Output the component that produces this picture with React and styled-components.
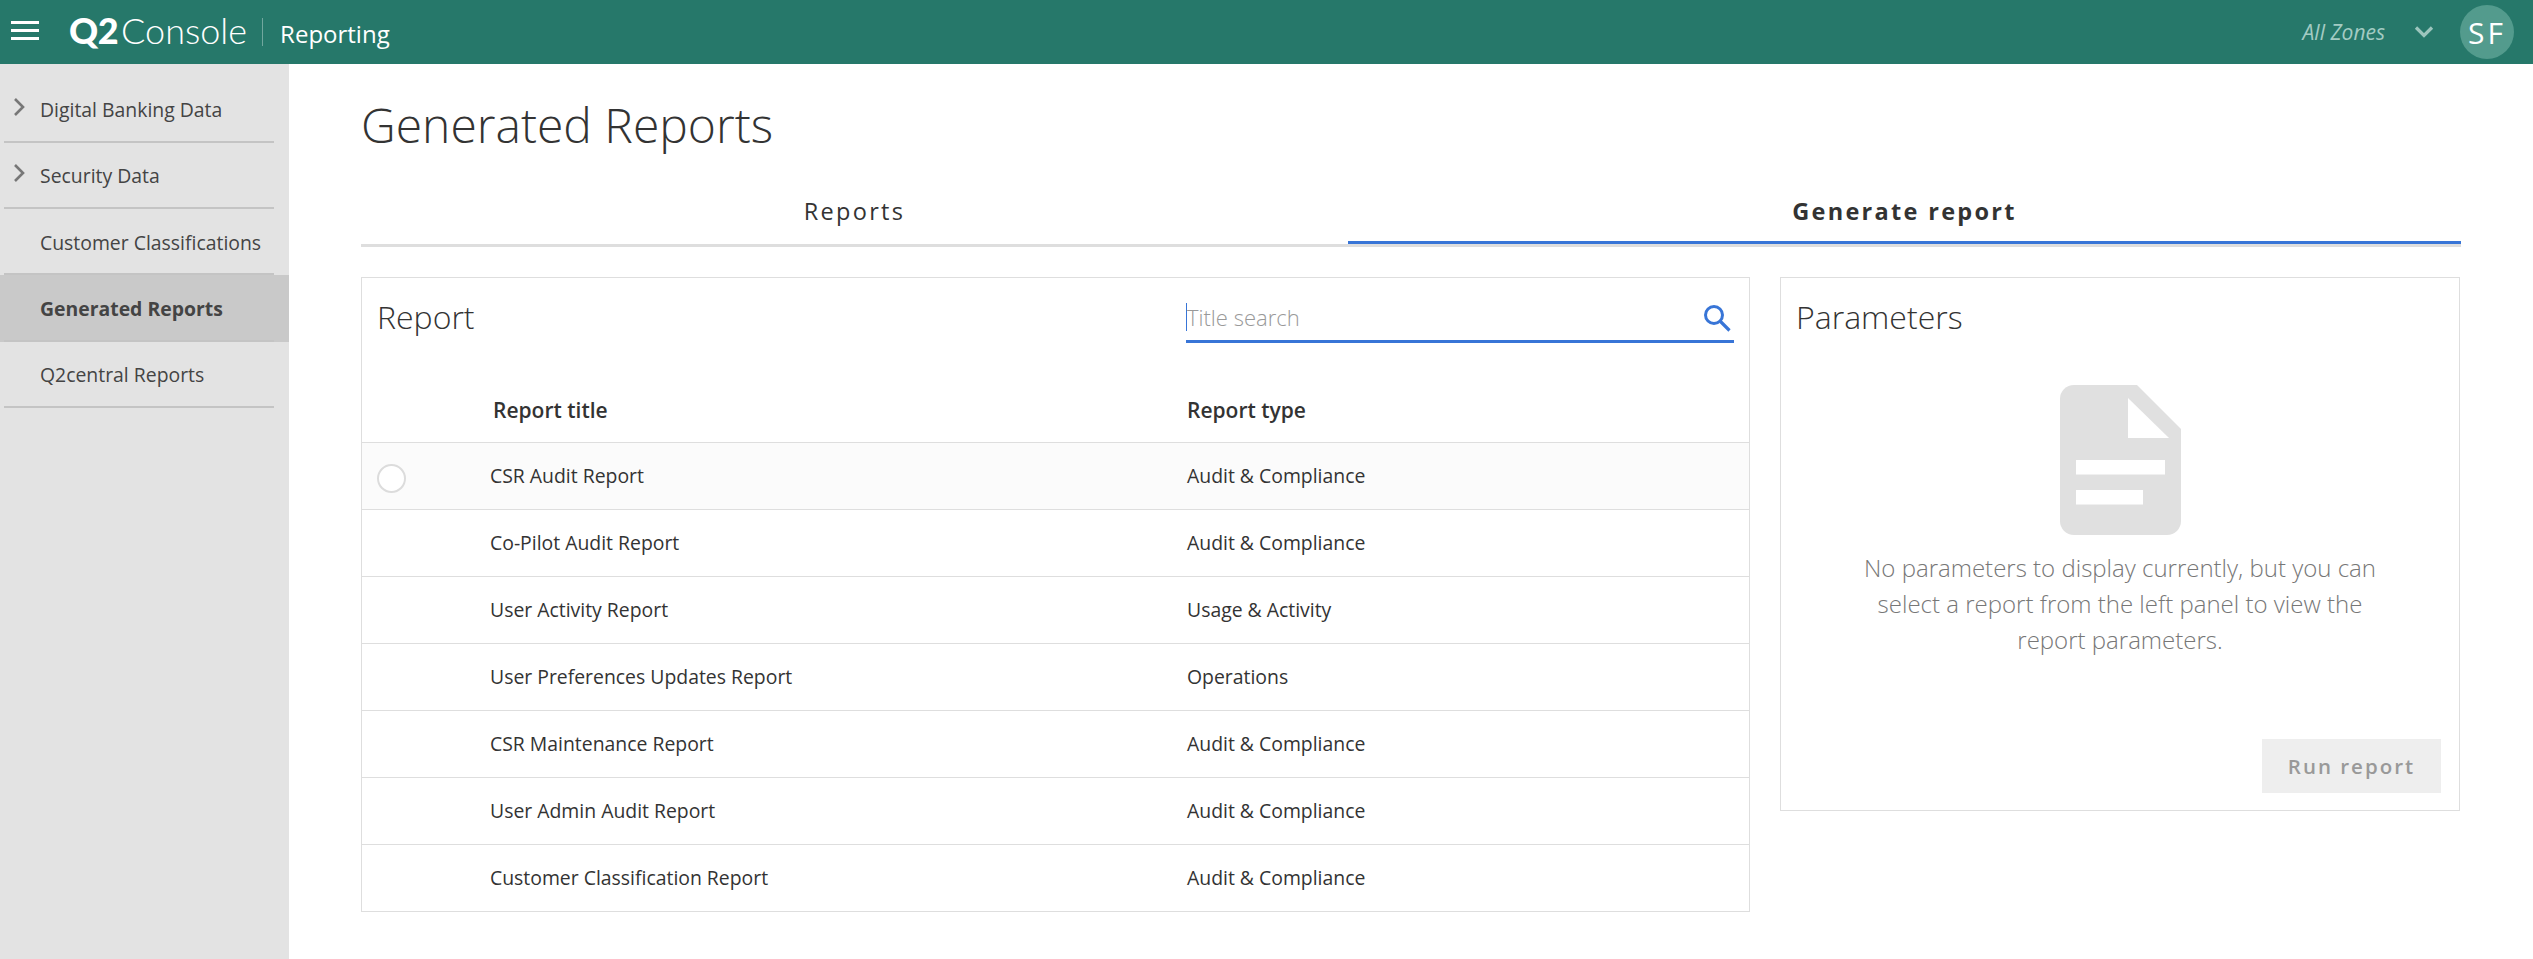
import styled, { createGlobalStyle } from "styled-components";

const GlobalStyle = createGlobalStyle`
  html, body {
    margin: 0;
    padding: 0;
    background: #fff;
    font-family: "Open Sans", "Liberation Sans", sans-serif;
    color: #333;
  }
  * { box-sizing: border-box; }
`;

const Page = styled.div`
  display: flex;
  flex-direction: column;
  height: 959px;
  overflow: hidden;
`;

const TopBar = styled.header`
  display: flex;
  align-items: center;
  height: 64px;
  flex: none;
  background: #26786a;
  color: #fff;
  padding: 0 19px 0 11px;
`;

const Burger = styled.div`
  display: flex;
  flex-direction: column;
  gap: 5px;
  width: 28px;
  margin-right: 30px;
  margin-top: -4px;
  span {
    height: 3px;
    background: #fff;
  }
`;

const Logo = styled.div`
  display: flex;
  align-items: baseline;
  color: #fff;
  font-family: Lato, "Open Sans", sans-serif;
  font-size: 36px;
  line-height: 40px;
  margin-top: -4px;
  b {
    font-weight: 900;
    letter-spacing: -0.5px;
    margin-right: 3px;
  }
  span {
    font-weight: 300;
    letter-spacing: 0;
  }
`;

const Divider = styled.div`
  width: 1px;
  height: 28px;
  margin: 0 17px 0 15px;
  background: rgba(255, 255, 255, 0.35);
`;

const Section = styled.div`
  font-size: 24px;
  line-height: 32px;
  margin-top: 4px;
`;

const ZoneGroup = styled.div`
  display: flex;
  align-items: center;
  margin-left: auto;
`;

const ZoneLabel = styled.span`
  font-size: 21px;
  font-style: italic;
  font-weight: 400;
  color: #a3cbc3;
  margin-right: 28px;
`;

const ZoneChevron = styled.svg`
  width: 22px;
  height: 14px;
  margin-right: 25px;
`;

const Avatar = styled.div`
  display: flex;
  align-items: center;
  justify-content: center;
  width: 54px;
  height: 54px;
  border-radius: 50%;
  background: #539b8d;
  font-size: 30px;
  letter-spacing: 3px;
  color: #fff;
`;

const Body = styled.div`
  display: flex;
  flex: 1;
  min-height: 0;
`;

const Sidebar = styled.nav`
  width: 289px;
  flex: none;
  background: #e3e3e3;
  padding-top: 12.5px;
`;

const NavItem = styled.div`
  position: relative;
  display: flex;
  align-items: center;
  height: 66.25px;
  padding: 0 0 0 40px;
  font-size: 19.4px;
  font-weight: ${(p) => (p.$active ? 700 : 400)};
  color: #444;
  background: ${(p) => (p.$active ? "#c9c9c9" : "transparent")};
  &::after {
    content: "";
    position: absolute;
    left: 4px;
    width: 270px;
    bottom: 0;
    height: 2px;
    background: #c4c4c4;
  }
`;

const NavChevron = styled.svg`
  position: absolute;
  left: 12px;
  top: 20px;
  width: 15px;
  height: 20px;
`;

const Main = styled.main`
  flex: 1;
  min-width: 0;
  padding: 0 72px;
`;

const PageTitle = styled.h1`
  margin: 0;
  height: 132px;
  padding-top: 27px;
  font-size: 48px;
  line-height: 68px;
  font-weight: 300;
  color: #333;
`;

const Tabs = styled.div`
  display: flex;
  height: 51px;
  border-bottom: 3px solid #dedede;
`;

const Tab = styled.div`
  display: flex;
  align-items: center;
  justify-content: center;
  flex: ${(p) => (p.$active ? "0 0 1113px" : "0 0 987px")};
  height: 48px;
  padding-bottom: ${(p) => (p.$active ? "15px" : "18px")};
  font-size: 23.5px;
  letter-spacing: 2.3px;
  font-weight: ${(p) => (p.$active ? 700 : 400)};
  color: #333;
  border-bottom: ${(p) => (p.$active ? "3px solid #3875d7" : "none")};
`;

const Columns = styled.div`
  display: flex;
  align-items: flex-start;
  gap: 30px;
  margin-top: 30px;
`;

const Card = styled.section`
  border: 1px solid #dedede;
  background: #fff;
`;

const ReportCard = styled(Card)`
  width: 1389px;
  height: 635px;
`;

const ParamsCard = styled(Card)`
  display: flex;
  flex-direction: column;
  width: 680px;
  height: 534px;
  padding: 0 18px 17px 15px;
`;

const CardHead = styled.div`
  display: flex;
  align-items: flex-start;
  justify-content: space-between;
  height: 98px;
  padding: 0 15px 0 15px;
`;

const CardTitle = styled.h2`
  margin: 17px 0 0;
  font-size: 32px;
  line-height: 44px;
  font-weight: 300;
  color: #333;
`;

const SearchBox = styled.div`
  display: flex;
  align-items: center;
  justify-content: space-between;
  width: 548px;
  height: 65px;
  padding-top: 15px;
  border-bottom: 3px solid #3875d7;
`;

const SearchInput = styled.div`
  font-size: 22px;
  line-height: 28px;
  font-weight: 300;
  color: #999;
  border-left: 1px solid #3875d7;
  height: 28px;
`;

const SearchIcon = styled.svg`
  width: 28px;
  height: 28px;
  margin-right: 3px;
  margin-top: 2px;
`;

const Row = styled.div`
  display: grid;
  grid-template-columns: 1fr 562px;
  align-items: center;
  height: ${(p) => (p.$last ? "65px" : "67px")};
  padding: 0 0 ${(p) => (p.$last ? "0" : "2px")} 128px;
  font-size: 19.4px;
  color: #333;
  border-bottom: ${(p) => (p.$last ? "none" : "1px solid #dedede")};
  background: ${(p) => (p.$hover ? "#fbfbfb" : "#fff")};
  position: relative;
`;

const HeadRow = styled(Row)`
  font-size: 21px;
  font-weight: 600;
  padding: 1px 0 0 131px;
`;

const Radio = styled.span`
  position: absolute;
  left: 15px;
  top: 21px;
  width: 29px;
  height: 29px;
  border-radius: 50%;
  border: 2.5px solid #dcdcdc;
  background: #fff;
`;

const EmptyState = styled.div`
  display: flex;
  flex-direction: column;
  align-items: center;
  margin-top: 46px;
  padding-left: 3px;
  flex: 1;
`;

const EmptyText = styled.p`
  margin: 15px 0 0;
  width: 530px;
  text-align: center;
  font-size: 24px;
  line-height: 36px;
  font-weight: 300;
  color: #777;
`;

const RunButton = styled.button`
  align-self: flex-end;
  width: 179px;
  height: 54px;
  border: 0;
  background: #eee;
  font-family: inherit;
  font-size: 20.5px;
  font-weight: 600;
  letter-spacing: 2px;
  color: #999;
`;

const navItems = [
  { label: "Digital Banking Data", expandable: true },
  { label: "Security Data", expandable: true },
  { label: "Customer Classifications" },
  { label: "Generated Reports", active: true },
  { label: "Q2central Reports" },
];

const reports = [
  ["CSR Audit Report", "Audit & Compliance"],
  ["Co-Pilot Audit Report", "Audit & Compliance"],
  ["User Activity Report", "Usage & Activity"],
  ["User Preferences Updates Report", "Operations"],
  ["CSR Maintenance Report", "Audit & Compliance"],
  ["User Admin Audit Report", "Audit & Compliance"],
  ["Customer Classification Report", "Audit & Compliance"],
];

const DocIcon = () => (
  <svg width="121" height="150" viewBox="0 0 121 150">
    <path
      d="M14 0H77L121 44V136a14 14 0 0 1-14 14H14a14 14 0 0 1-14-14V14A14 14 0 0 1 14 0Z"
      fill="#e0e0e0"
    />
    <path d="M68 13V53H109Z" fill="#fff" />
    <rect x="16" y="75" width="89" height="14.5" fill="#fff" />
    <rect x="16" y="105" width="67" height="14.5" fill="#fff" />
  </svg>
);

const App = () => (
  <Page>
    <GlobalStyle />
    <TopBar>
      <Burger>
        <span />
        <span />
        <span />
      </Burger>
      <Logo>
        <b>Q2</b>
        <span>Console</span>
      </Logo>
      <Divider />
      <Section>Reporting</Section>
      <ZoneGroup>
        <ZoneLabel>All Zones</ZoneLabel>
        <ZoneChevron viewBox="0 0 22 14">
          <path d="M3 2.5L11 10.5L19 2.5" fill="none" stroke="#9cc5bd" strokeWidth="3.2" />
        </ZoneChevron>
        <Avatar>SF</Avatar>
      </ZoneGroup>
    </TopBar>
    <Body>
      <Sidebar>
        {navItems.map((item) => (
          <NavItem key={item.label} $active={item.active}>
            {item.expandable && (
              <NavChevron viewBox="0 0 15 20">
                <path d="M3 2L11 10L3 18" fill="none" stroke="#777" strokeWidth="2.6" />
              </NavChevron>
            )}
            {item.label}
          </NavItem>
        ))}
      </Sidebar>
      <Main>
        <PageTitle>Generated Reports</PageTitle>
        <Tabs>
          <Tab>Reports</Tab>
          <Tab $active>Generate report</Tab>
        </Tabs>
        <Columns>
          <ReportCard>
            <CardHead>
              <CardTitle>Report</CardTitle>
              <SearchBox>
                <SearchInput>Title search</SearchInput>
                <SearchIcon viewBox="0 0 28 28">
                  <circle cx="11" cy="11" r="8.5" fill="none" stroke="#3875d7" strokeWidth="3" />
                  <path d="M17.5 17.5L26.5 26.5" stroke="#3875d7" strokeWidth="3.2" />
                </SearchIcon>
              </SearchBox>
            </CardHead>
            <HeadRow>
              <span>Report title</span>
              <span>Report type</span>
            </HeadRow>
            {reports.map(([title, type], i) => (
              <Row key={title} $hover={i === 0} $last={i === reports.length - 1}>
                {i === 0 && <Radio />}
                <span>{title}</span>
                <span>{type}</span>
              </Row>
            ))}
          </ReportCard>
          <ParamsCard>
            <CardTitle>Parameters</CardTitle>
            <EmptyState>
              <DocIcon />
              <EmptyText>
                No parameters to display currently, but you can select a report from the left panel to view the report parameters.
              </EmptyText>
            </EmptyState>
            <RunButton>Run report</RunButton>
          </ParamsCard>
        </Columns>
      </Main>
    </Body>
  </Page>
);

export default App;
